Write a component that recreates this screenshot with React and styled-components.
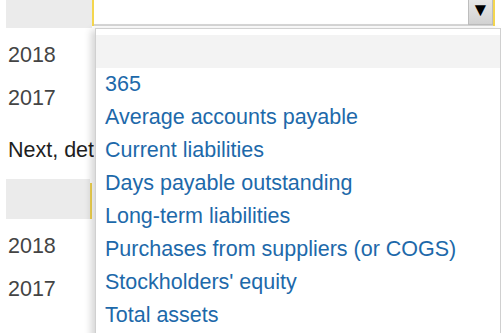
import React from 'react';
import styled, { createGlobalStyle } from 'styled-components';

const GlobalStyle = createGlobalStyle`
  html, body {
    margin: 0;
    background: #ffffff;
    overflow: hidden;
  }
  body {
    font-family: "Liberation Sans", Arial, sans-serif;
    font-size: 21.5px;
  }
`;

const Page = styled.div`
  position: relative;
  width: 501px;
  height: 333px;
  overflow: hidden;
`;

const Content = styled.div`
  margin-top: -12px;
  padding: 0 0 0 6px;
`;

const HeaderRow = styled.div`
  display: flex;
  height: 40px;
`;

const LabelCell = styled.div`
  width: ${(p) => p.$width}px;
  background: #ebebeb;
`;

const InputCell = styled.div`
  flex: 1;
  display: flex;
  align-items: flex-start;
`;

const SelectBox = styled.div`
  display: flex;
  justify-content: flex-end;
  width: 399px;
  height: 38px;
  background: #ffffff;
  border-left: 2px solid #f4d64e;
  border-right: 2px solid #f4d64e;
  box-shadow: inset 0 -2px 0 #d6d6d6;
`;

const SelectButton = styled.div`
  width: 25px;
  height: 37px;
  box-sizing: border-box;
  border: 1px solid #bdbdbd;
  border-top: none;
  background: linear-gradient(#f2f2f2, #d2d2d2);
  display: flex;
  align-items: flex-end;
  justify-content: center;
  padding-bottom: 5px;
  font-size: 19px;
  color: #000;
  line-height: 1;
`;

const YellowMark = styled.div`
  width: 2px;
  margin-top: 4px;
  background: #f0d350;
`;

const Rows = styled.div`
  padding-top: 6px;
`;

const YearRow = styled.div`
  height: 43px;
  display: flex;
  align-items: center;
  padding-left: 2px;
  color: #444444;
`;

const Paragraph = styled.p`
  margin: 0;
  width: 86px;
  height: 58px;
  display: flex;
  align-items: center;
  padding: 1px 0 0 2px;
  color: #1e1e1e;
  white-space: nowrap;
  overflow: hidden;
`;

const Menu = styled.div`
  position: absolute;
  left: 95px;
  top: 28px;
  width: 404px;
  height: 320px;
  background: #ffffff;
  border: 1px solid #d0d0d0;
  box-shadow: -4px 2px 7px rgba(0, 0, 0, 0.16);
  padding-top: 6px;
`;

const MenuItem = styled.div`
  height: 33px;
  display: flex;
  align-items: center;
  padding-left: 9px;
  color: #1d69aa;
  background: ${(p) => (p.$blank ? '#f3f3f3' : 'transparent')};
  white-space: nowrap;
`;

const options = [
  '365',
  'Average accounts payable',
  'Current liabilities',
  'Days payable outstanding',
  'Long-term liabilities',
  'Purchases from suppliers (or COGS)',
  "Stockholders' equity",
  'Total assets',
];

export default function App() {
  return (
    <>
      <GlobalStyle />
      <Page>
        <Content>
          <HeaderRow>
            <LabelCell $width={86} />
            <InputCell>
              <SelectBox>
                <SelectButton>▼</SelectButton>
              </SelectBox>
            </InputCell>
          </HeaderRow>
          <Rows>
            <YearRow>2018</YearRow>
            <YearRow>2017</YearRow>
          </Rows>
          <Paragraph>Next, determine the days payable outstanding.</Paragraph>
          <HeaderRow>
            <LabelCell $width={84} />
            <YellowMark />
          </HeaderRow>
          <Rows>
            <YearRow>2018</YearRow>
            <YearRow>2017</YearRow>
          </Rows>
        </Content>
        <Menu>
          <MenuItem $blank />
          {options.map((o) => (
            <MenuItem key={o}>{o}</MenuItem>
          ))}
        </Menu>
      </Page>
    </>
  );
}
